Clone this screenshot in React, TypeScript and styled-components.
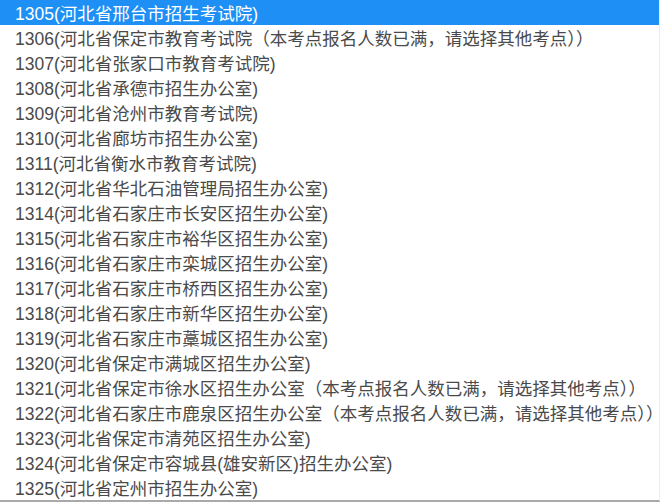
import React from "react";
import styled, { createGlobalStyle } from "styled-components";

const GlobalStyle = createGlobalStyle`
  html, body {
    margin: 0;
    padding: 0;
    background: #ffffff;
  }
  body {
    font-family: "Liberation Sans", "Noto Sans CJK SC", sans-serif;
  }
`;

const ListBox = styled.ul`
  list-style: none;
  margin: 0;
  padding: 0;
  width: 660px;
  height: 502px;
  box-sizing: border-box;
  border-bottom: 2px solid #a9a9a9;
  border-right: 1px solid #ececec;
  display: flex;
  flex-direction: column;
  overflow: hidden;
  background: #ffffff;
`;

const Option = styled.li<{ $selected?: boolean }>`
  height: 25px;
  flex: 0 0 25px;
  display: flex;
  align-items: center;
  padding-left: 15px;
  box-sizing: border-box;
  font-family: "Liberation Sans", "Noto Sans CJK SC", sans-serif;
  font-size: 17.5px;
  white-space: nowrap;
  color: ${(p) => (p.$selected ? "#ffffff" : "#4a4a4a")};
  background: ${(p) => (p.$selected ? "#1e8ff5" : "transparent")};
`;

const FULL = "（本考点报名人数已满，请选择其他考点））";

const options: string[] = [
  "1305(河北省邢台市招生考试院)",
  "1306(河北省保定市教育考试院" + FULL,
  "1307(河北省张家口市教育考试院)",
  "1308(河北省承德市招生办公室)",
  "1309(河北省沧州市教育考试院)",
  "1310(河北省廊坊市招生办公室)",
  "1311(河北省衡水市教育考试院)",
  "1312(河北省华北石油管理局招生办公室)",
  "1314(河北省石家庄市长安区招生办公室)",
  "1315(河北省石家庄市裕华区招生办公室)",
  "1316(河北省石家庄市栾城区招生办公室)",
  "1317(河北省石家庄市桥西区招生办公室)",
  "1318(河北省石家庄市新华区招生办公室)",
  "1319(河北省石家庄市藁城区招生办公室)",
  "1320(河北省保定市满城区招生办公室)",
  "1321(河北省保定市徐水区招生办公室" + FULL,
  "1322(河北省石家庄市鹿泉区招生办公室" + FULL,
  "1323(河北省保定市清苑区招生办公室)",
  "1324(河北省保定市容城县(雄安新区)招生办公室)",
  "1325(河北省定州市招生办公室)",
];

export default function App() {
  return (
    <>
      <GlobalStyle />
      <ListBox>
        {options.map((o, i) => (
          <Option key={o} $selected={i === 0}>
            {o}
          </Option>
        ))}
      </ListBox>
    </>
  );
}
